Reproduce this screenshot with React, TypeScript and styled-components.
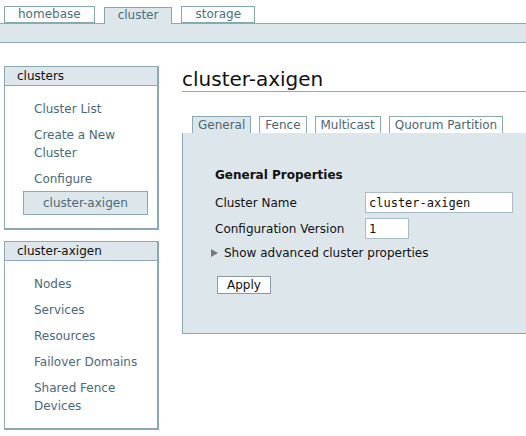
import styled, { createGlobalStyle } from "styled-components";

const GlobalStyle = createGlobalStyle`
    html, body {
        margin: 0;
        padding: 0;
        background: #ffffff;
        font-family: "DejaVu Sans", Verdana, sans-serif;
        font-size: 12px;
        overflow: hidden;
    }
`

const BORDER = "#8aa8b6";
const PANEL = "#dde6eb";
const LINK = "#4a6a7b";

const topTabs = ["homebase", "cluster", "storage"];
const clusterLinks = [["Cluster List"], ["Create a New", "Cluster"], ["Configure"]];
const clusterMenu = [["Nodes"], ["Services"], ["Resources"], ["Failover Domains"], ["Shared Fence", "Devices"]];
const panelTabs = ["General", "Fence", "Multicast", "Quorum Partition"];

export default function App() {
    return (
        <Page>
            <GlobalStyle />
            <TopTabs>
                {topTabs.map((name) => (
                    <TopTab key={name} $active={name === "cluster"}>{name}</TopTab>
                ))}
            </TopTabs>
            <TopBar />

            <Body>
                <Sidebar>
                    <MenuBox>
                        <MenuHeader>clusters</MenuHeader>
                        <MenuList>
                            {clusterLinks.map((lines) => (
                                <MenuItem key={lines[0]}>
                                    {lines.map((l) => <div key={l}>{l}</div>)}
                                </MenuItem>
                            ))}
                            <SelectedItem>cluster-axigen</SelectedItem>
                        </MenuList>
                    </MenuBox>

                    <MenuBox>
                        <MenuHeader>cluster-axigen</MenuHeader>
                        <MenuList>
                            {clusterMenu.map((lines) => (
                                <MenuItem key={lines[0]}>
                                    {lines.map((l) => <div key={l}>{l}</div>)}
                                </MenuItem>
                            ))}
                        </MenuList>
                    </MenuBox>
                </Sidebar>

                <Main>
                    <Title>cluster-axigen</Title>

                    <PanelTabs>
                        {panelTabs.map((name) => (
                            <PanelTab key={name} $active={name === "General"}>{name}</PanelTab>
                        ))}
                    </PanelTabs>

                    <Panel>
                        <SectionTitle>General Properties</SectionTitle>
                        <FormGrid>
                            <Label>Cluster Name</Label>
                            <TextInput $width={148} defaultValue="cluster-axigen" />
                            <Label>Configuration Version</Label>
                            <TextInput $width={44} defaultValue="1" />
                        </FormGrid>
                        <Toggle>
                            <Arrow />
                            Show advanced cluster properties
                        </Toggle>
                        <ApplyButton type="button">Apply</ApplyButton>
                    </Panel>
                </Main>
            </Body>
        </Page>
    );
}

const Page = styled.div`
    width: 100%;
`
const TopTabs = styled.div`
    display: flex;
    align-items: flex-end;
    gap: 9px;
    padding: 6px 0 0 4px;
`
const TopTab = styled.div<{ $active?: boolean }>`
    height: 15px;
    line-height: 15px;
    padding: 0 13px;
    border: 1px solid #84a9ae;
    border-bottom: ${(p) => (p.$active ? "none" : "1px solid #84a9ae")};
    background: ${(p) => (p.$active ? PANEL : "#ffffff")};
    color: #4a6e7e;
    margin-bottom: ${(p) => (p.$active ? "-1px" : "0")};
    padding-bottom: ${(p) => (p.$active ? "1px" : "0")};
    position: relative;
    z-index: 1;
`
const TopBar = styled.div`
    height: 18px;
    background: ${PANEL};
    border-top: 1px solid ${BORDER};
    border-bottom: 1px solid ${BORDER};
`
const Body = styled.div`
    display: flex;
    align-items: flex-start;
    gap: 23px;
    padding: 23px 0 0 4px;
`
const Sidebar = styled.div`
    width: 155px;
    flex-shrink: 0;
    display: flex;
    flex-direction: column;
    gap: 11px;
`
const MenuBox = styled.div`
    border: 1px solid ${BORDER};
    border-right-width: 2px;
    border-bottom-width: 2px;
    background: #ffffff;
`
const MenuHeader = styled.div`
    height: 18px;
    line-height: 18px;
    padding-left: 12px;
    background: ${PANEL};
    border-bottom: 1px solid ${BORDER};
    color: #111111;
`
const MenuList = styled.div`
    padding: 10px 0 9px 29px;
`
const MenuItem = styled.div`
    padding: 4px 0;
    line-height: 18px;
    color: ${LINK};
`
const SelectedItem = styled.div`
    margin: -1px 0 4px -11px;
    width: 104px;
    padding: 2px 0 2px 19px;
    line-height: 18px;
    border: 1px solid ${BORDER};
    background: ${PANEL};
    color: ${LINK};
`
const Main = styled.div`
    flex: 1;
    min-width: 0;
`
const Title = styled.h1`
    margin: 0;
    font-size: 20px;
    font-weight: 400;
    line-height: 24px;
    color: #111111;
    padding-top: 1px;
    border-bottom: 1px solid ${BORDER};
`
const PanelTabs = styled.div`
    display: flex;
    align-items: flex-end;
    gap: 8px;
    margin-top: 24px;
    padding-left: 10px;
`
const PanelTab = styled.div<{ $active?: boolean }>`
    height: 16px;
    line-height: 16px;
    padding: 0 5px;
    border: 1px solid ${BORDER};
    border-bottom: none;
    background: ${(p) => (p.$active ? PANEL : "#ffffff")};
    color: #4c6675;
`
const Panel = styled.div`
    height: 201px;
    box-sizing: border-box;
    background: ${PANEL};
    border-left: 1px solid ${BORDER};
    border-bottom: 1px solid ${BORDER};
    padding: 33px 0 0 32px;
`
const SectionTitle = styled.div`
    font-weight: 700;
    line-height: 18px;
    color: #111111;
`
const FormGrid = styled.div`
    display: grid;
    grid-template-columns: 150px auto;
    row-gap: 5px;
    align-items: center;
    justify-items: start;
    margin-top: 8px;
`
const Label = styled.div`
    color: #111111;
`
const TextInput = styled.input<{ $width: number }>`
    box-sizing: border-box;
    width: ${(p) => p.$width}px;
    height: 21px;
    padding: 0 3px;
    border: 1px solid #a9bcc6;
    background: #ffffff;
    font-family: "DejaVu Sans Mono", monospace;
    font-size: 12px;
    color: #111111;
    outline: none;
`
const Toggle = styled.div`
    display: flex;
    align-items: center;
    margin: 5px 0 0 -4px;
    line-height: 18px;
    color: #111111;
`
const Arrow = styled.span`
    width: 0;
    height: 0;
    border-top: 4px solid transparent;
    border-bottom: 4px solid transparent;
    border-left: 7px solid #7a7a7a;
    margin-right: 6px;
`
const ApplyButton = styled.button`
    display: block;
    margin: 14px 0 0 2px;
    width: 54px;
    height: 18px;
    padding: 0;
    border: 1px solid #8a9ba6;
    background: #ffffff;
    font-family: "DejaVu Sans", Verdana, sans-serif;
    font-size: 12px;
    line-height: 16px;
    color: #111111;
`
